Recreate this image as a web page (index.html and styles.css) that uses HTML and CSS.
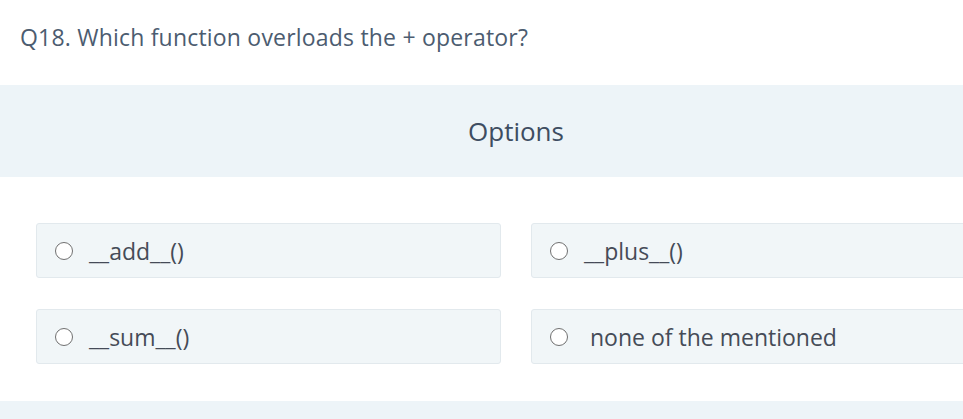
FILE: index.html
```html
<!DOCTYPE html>
<html lang="en">
<head>
<meta charset="utf-8">
<title>Q18</title>
<link rel="stylesheet" href="styles.css">
</head>
<body>
<div class="page">
  <h2 class="question">Q18. Which function overloads the + operator?</h2>
  <div class="options-head"><span class="options-title">Options</span></div>
  <div class="options-grid">
    <label class="option"><span class="radio"></span><span class="label-text">__add__()</span></label>
    <label class="option"><span class="radio"></span><span class="label-text">__plus__()</span></label>
    <label class="option"><span class="radio"></span><span class="label-text">__sum__()</span></label>
    <label class="option"><span class="radio"></span><span class="label-text label-word">none of the mentioned</span></label>
  </div>
  <div class="footer-band"></div>
</div>
</body>
</html>
```
FILE: styles.css
```css
html, body {
  margin: 0;
  padding: 0;
  overflow: hidden;
  background: #ffffff;
}
.page {
  width: 963px;
  height: 419px;
  overflow: hidden;
  font-family: "Open Sans", "Noto Sans", sans-serif;
}
.question {
  margin: 0;
  height: 85px;
  box-sizing: border-box;
  padding: 22px 0 0 20px;
  font-size: 23px;
  font-weight: 400;
  line-height: 30px;
  letter-spacing: 0.2px;
  color: #4c5c70;
}
.options-head {
  height: 92px;
  background: #edf4f8;
  display: flex;
  align-items: center;
  justify-content: center;
  padding-left: 69px;
  box-sizing: border-box;
}
.options-title {
  font-size: 26px;
  color: #3e4d61;
}
.options-grid {
  display: grid;
  grid-template-columns: 465px 465px;
  column-gap: 30px;
  row-gap: 31px;
  padding: 46px 0 0 36px;
  width: 1100px;
}
.option {
  height: 55px;
  box-sizing: border-box;
  border: 1px solid #e2e9ed;
  border-radius: 3px;
  background: #f1f6f8;
  display: flex;
  align-items: center;
  padding-left: 18px;
  font-size: 23px;
  color: #454b57;
}
.radio {
  width: 18px;
  height: 18px;
  box-sizing: border-box;
  border: 1.5px solid #707070;
  border-radius: 50%;
  background: #ffffff;
  flex: none;
}
.label-text {
  margin-left: 16px;
}
.label-word {
  margin-left: 22px;
}
.footer-band {
  margin-top: 37px;
  height: 18px;
  background: #edf4f8;
}
```
